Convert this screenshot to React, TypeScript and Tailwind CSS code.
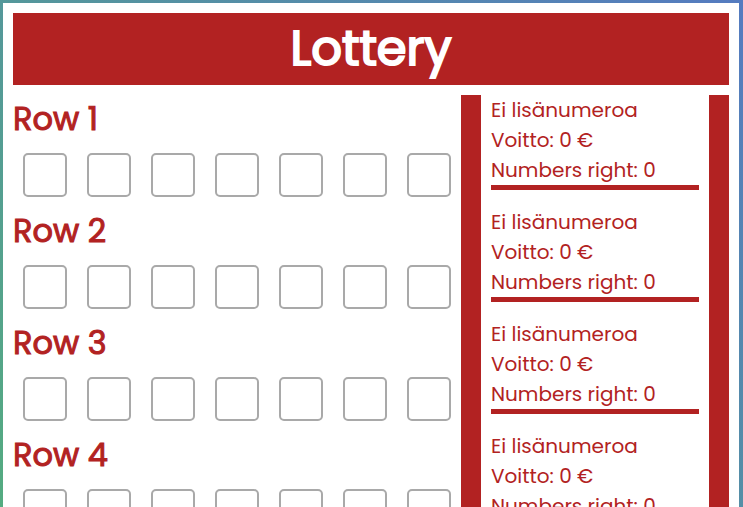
import React from "react";

const rows = [1, 2, 3, 4];
const cells = [1, 2, 3, 4, 5, 6, 7];

function LotteryRow({ row }: { row: number }) {
  return (
    <section aria-labelledby={`row-${row}`}>
      <h2
        id={`row-${row}`}
        className="text-[32px] leading-[48px] [-webkit-text-stroke:1px]"
      >
        Row {row}
      </h2>
      <div className="flex">
        {cells.map((cell) => (
          <input
            key={cell}
            type="text"
            inputMode="numeric"
            aria-label={`Row ${row}, number ${cell}`}
            className="m-2.5 size-11 rounded-[5px] border-2 border-[#a9a9a9] bg-white text-center text-xl"
          />
        ))}
      </div>
    </section>
  );
}

function RowResult() {
  return (
    <div className="h-28">
      <div className="border-b-5 border-[#b22222] text-xl leading-[30px]">
        <p>Ei lisänumeroa</p>
        <p>Voitto: 0 €</p>
        <p>Numbers right: 0</p>
      </div>
    </div>
  );
}

export default function App() {
  return (
    <div className="flex min-h-screen bg-linear-[45deg,#54ad7e,#557bc0] pt-[3px] pr-1 pl-[3px] font-[Poppins,Inter,sans-serif] text-[#b22222]">
      <main className="flex-1 bg-white p-2.5">
        <h1 className="bg-[#b22222] text-center text-5xl leading-[72px] text-white [-webkit-text-stroke:2px]">
          Lottery
        </h1>
        <div className="mt-2.5 flex">
          <div className="shrink-0">
            {rows.map((row) => (
              <LotteryRow key={row} row={row} />
            ))}
          </div>
          <aside className="min-w-0 flex-1 border-x-20 border-[#b22222] px-2.5">
            {rows.map((row) => (
              <RowResult key={row} />
            ))}
          </aside>
        </div>
      </main>
    </div>
  );
}
